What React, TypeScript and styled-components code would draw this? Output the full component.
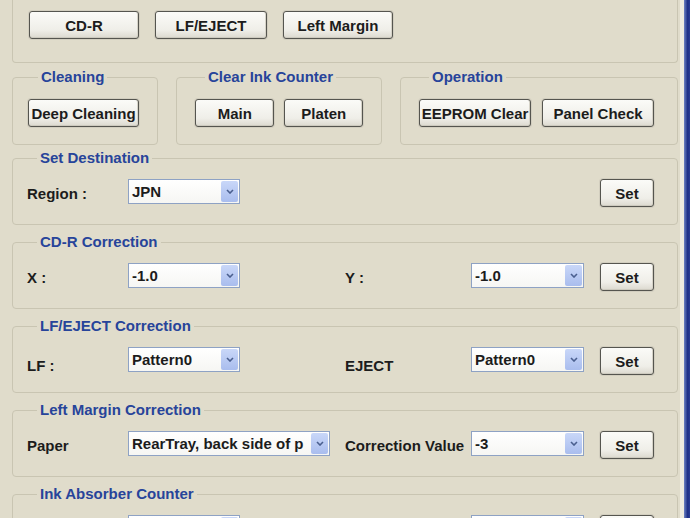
import styled, { createGlobalStyle } from "styled-components";

const GlobalStyle = createGlobalStyle`
  html, body {
    margin: 0;
    padding: 0;
    background: #e0dccb;
  }
  body {
    font-family: "Liberation Sans", Arial, sans-serif;
    font-size: 15px;
    font-weight: 700;
    color: #1c1c1c;
  }
`;

const Window = styled.div`
  display: flex;
  width: 690px;
  height: 518px;
  overflow: hidden;
  background: #e0dccb;
`;

const Main = styled.div`
  width: 680px;
  padding: 0 2px 0 12px;
  box-sizing: border-box;
  display: flex;
  flex-direction: column;
  flex-shrink: 0;
`;

// window frame on the right
const FrameEdge = styled.div`
  flex: 1;
  border-left: 4px solid #eeebdf;
  background: linear-gradient(to right, #6d82c2, #1d2f86 60%, #2a3c92);
`;

const TopPanel = styled.div`
  display: flex;
  flex-shrink: 0;
  gap: 16px;
  height: 63px;
  box-sizing: border-box;
  padding: 11px 0 0 16px;
  border: 1px solid #c9c5b2;
  border-top: none;
  border-radius: 0 0 4px 4px;
`;

const Group = styled.fieldset<{ $width?: number }>`
  margin: 0;
  min-width: 0;
  flex-shrink: 0;
  width: ${(p) => (p.$width ? `${p.$width}px` : "auto")};
  box-sizing: border-box;
  padding: 14px 18px 17px 18px;
  border: 1px solid #c9c5b2;
  border-radius: 4px;
`;

const Legend = styled.legend`
  margin-left: 10px;
  padding: 0 3px;
  color: #27449a;
  font-size: 15px;
  line-height: 16px;
`;

const GroupRow = styled.div`
  display: flex;
  flex-shrink: 0;
  gap: 18px;
  margin-top: 6px;
`;

const Buttons = styled.div<{ $gap: number }>`
  display: flex;
  gap: ${(p) => p.$gap}px;
`;

const Button = styled.button<{ $width: number }>`
  width: ${(p) => p.$width}px;
  height: 28px;
  padding: 0;
  border: 1px solid #55554f;
  border-radius: 3px;
  background: linear-gradient(#fbfbf8, #efeee8 70%, #dcd9cf);
  box-shadow: inset 0 -1px 0 #cdcabf, inset -1px 0 0 #d6d3c8, 0 0 0 1px #d2cebf;
  font-family: "Liberation Sans", Arial, sans-serif;
  font-size: 15px;
  font-weight: 700;
  color: #1c1c1c;
  white-space: nowrap;
  overflow: hidden;
`;

const Stack = styled.div`
  display: flex;
  flex-direction: column;
  flex-shrink: 0;
  gap: 9px;
  margin-top: 5px;
`;

const CorrectionGroup = styled(Group)`
  padding: 13px 23px 17px 14px;
`;

const FieldRow = styled.div`
  display: grid;
  grid-template-columns: 101px 217px 126px 129px 54px;
  align-items: center;
  height: 28px;
`;

const FieldLabel = styled.span<{ $drop?: boolean }>`
  white-space: nowrap;
  padding-top: ${(p) => (p.$drop ? 8 : 0)}px;
`;

const ComboBox = styled.div<{ $width: number }>`
  display: flex;
  align-items: stretch;
  width: ${(p) => p.$width}px;
  height: 25px;
  box-sizing: border-box;
  border: 1px solid #8ea2c4;
  background: linear-gradient(#ffffff, #f6f6f3);
  align-self: start;
`;

const ComboText = styled.span`
  flex: 1;
  padding-left: 3px;
  line-height: 23px;
  white-space: nowrap;
  overflow: hidden;
`;

const ComboArrow = styled.span`
  width: 17px;
  margin: 1px;
  display: flex;
  align-items: center;
  justify-content: center;
  border-radius: 2px;
  background: linear-gradient(#c9d7f8, #a9bdee);
`;

const SetButton = styled(Button)`
  grid-column: 5;
  border-width: 1.5px;
`;

function Combo({ value, width }: { value: string; width: number }) {
  return (
    <ComboBox $width={width}>
      <ComboText>{value}</ComboText>
      <ComboArrow>
        <svg width="8" height="5" viewBox="0 0 8 5">
          <path d="M1 1 L4 4 L7 1" fill="none" stroke="#4a5f8f" strokeWidth="1.6" />
        </svg>
      </ComboArrow>
    </ComboBox>
  );
}

export default function App() {
  return (
    <Window>
      <GlobalStyle />
      <Main>
        <TopPanel>
          <Button $width={110}>CD-R</Button>
          <Button $width={112}>LF/EJECT</Button>
          <Button $width={110}>Left Margin</Button>
        </TopPanel>

        <GroupRow>
          <Group $width={146} style={{ paddingLeft: 15 }}>
            <Legend>Cleaning</Legend>
            <Button $width={111}>Deep Cleaning</Button>
          </Group>
          <Group $width={206}>
            <Legend>Clear Ink Counter</Legend>
            <Buttons $gap={10}>
              <Button $width={81}>Main</Button>
              <Button $width={80}>Platen</Button>
            </Buttons>
          </Group>
          <Group $width={278}>
            <Legend>Operation</Legend>
            <Buttons $gap={11}>
              <Button $width={112}>EEPROM Clear</Button>
              <Button $width={112}>Panel Check</Button>
            </Buttons>
          </Group>
        </GroupRow>

        <Stack>
          <CorrectionGroup>
            <Legend>Set Destination</Legend>
            <FieldRow>
              <FieldLabel>Region :</FieldLabel>
              <Combo value="JPN" width={112} />
              <SetButton $width={54}>Set</SetButton>
            </FieldRow>
          </CorrectionGroup>

          <CorrectionGroup>
            <Legend>CD-R Correction</Legend>
            <FieldRow>
              <FieldLabel>X :</FieldLabel>
              <Combo value="-1.0" width={112} />
              <FieldLabel>Y :</FieldLabel>
              <Combo value="-1.0" width={113} />
              <SetButton $width={54}>Set</SetButton>
            </FieldRow>
          </CorrectionGroup>

          <CorrectionGroup>
            <Legend>LF/EJECT Correction</Legend>
            <FieldRow>
              <FieldLabel $drop>LF :</FieldLabel>
              <Combo value="Pattern0" width={112} />
              <FieldLabel $drop>EJECT</FieldLabel>
              <Combo value="Pattern0" width={113} />
              <SetButton $width={54}>Set</SetButton>
            </FieldRow>
          </CorrectionGroup>

          <CorrectionGroup>
            <Legend>Left Margin Correction</Legend>
            <FieldRow>
              <FieldLabel>Paper</FieldLabel>
              <Combo value="RearTray, back side of p" width={202} />
              <FieldLabel>Correction Value</FieldLabel>
              <Combo value="-3" width={113} />
              <SetButton $width={54}>Set</SetButton>
            </FieldRow>
          </CorrectionGroup>

          <CorrectionGroup>
            <Legend>Ink Absorber Counter</Legend>
            <FieldRow>
              <FieldLabel />
              <Combo value="" width={112} />
              <FieldLabel />
              <Combo value="" width={113} />
              <SetButton $width={54} aria-label="Set" />
            </FieldRow>
          </CorrectionGroup>
        </Stack>
      </Main>
      <FrameEdge />
    </Window>
  );
}
